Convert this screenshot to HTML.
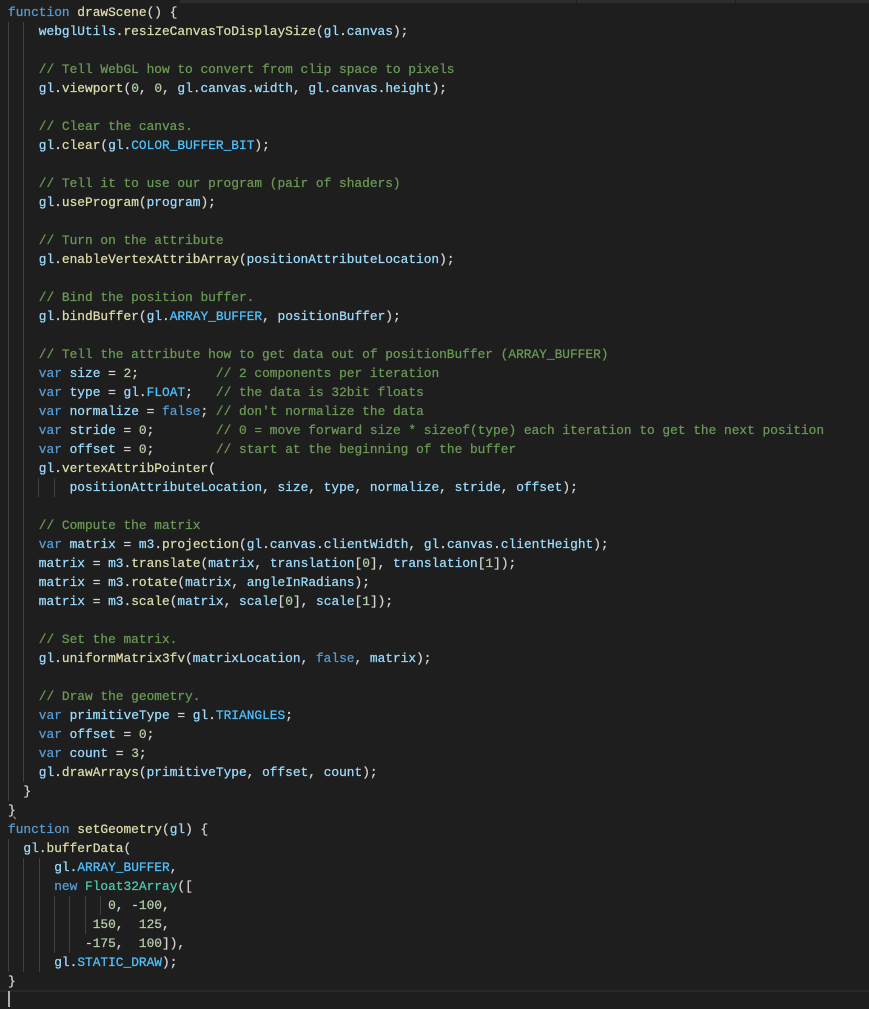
<!DOCTYPE html>
<html><head><meta charset="utf-8"><style>
html,body{margin:0;padding:0;background:#1e1e1e;width:869px;height:1007px;overflow:hidden;}
pre{position:absolute;left:8px;top:3px;margin:0;font-family:"Liberation Mono",monospace;font-size:12.84px;line-height:19px;color:#d4d4d4;white-space:pre;-webkit-text-stroke:0.25px currentColor;}
.k{color:#569cd6}.f{color:#dcdcaa}.v{color:#9cdcfe}.c{color:#6a9955}.n{color:#b5cea8}.t{color:#4ec9b0}.C{color:#4fc1ff}
.g{position:absolute;width:1px;background:#404040;}
</style></head><body>
<div style="position:absolute;left:180px;top:0;width:689px;height:3px;background:#2d2d2d;"></div>
<div style="position:absolute;left:576px;top:0;width:1px;height:3px;background:#1e1e1e;"></div>
<div style="position:absolute;left:735px;top:0;width:1px;height:3px;background:#1e1e1e;"></div>
<div class="g" style="left:8px;top:22px;height:760px"></div>
<div class="g" style="left:23px;top:22px;height:760px"></div>
<div class="g" style="left:38px;top:478px;height:19px"></div>
<div class="g" style="left:54px;top:478px;height:19px"></div>
<div class="g" style="left:8px;top:782px;height:19px"></div>
<div class="g" style="left:8px;top:839px;height:133px"></div>
<div class="g" style="left:23px;top:858px;height:114px"></div>
<div class="g" style="left:39px;top:858px;height:114px"></div>
<div class="g" style="left:54px;top:896px;height:57px"></div>
<div class="g" style="left:69px;top:896px;height:57px"></div>
<div class="g" style="left:85px;top:896px;height:38px"></div>
<div class="g" style="left:100px;top:896px;height:19px"></div>
<div style="position:absolute;left:0;top:990px;width:869px;height:17px;border-top:2px solid #282828;"></div>
<div style="position:absolute;left:8px;top:991px;width:2px;height:16px;background:#aeafad;"></div>
<pre><span class="k">function</span> <span class="f">drawScene</span>() {
    <span class="v">webglUtils</span>.<span class="f">resizeCanvasToDisplaySize</span>(<span class="v">gl</span>.<span class="v">canvas</span>);

    <span class="c">// Tell WebGL how to convert from clip space to pixels</span>
    <span class="v">gl</span>.<span class="f">viewport</span>(<span class="n">0</span>, <span class="n">0</span>, <span class="v">gl</span>.<span class="v">canvas</span>.<span class="v">width</span>, <span class="v">gl</span>.<span class="v">canvas</span>.<span class="v">height</span>);

    <span class="c">// Clear the canvas.</span>
    <span class="v">gl</span>.<span class="f">clear</span>(<span class="v">gl</span>.<span class="C">COLOR_BUFFER_BIT</span>);

    <span class="c">// Tell it to use our program (pair of shaders)</span>
    <span class="v">gl</span>.<span class="f">useProgram</span>(<span class="v">program</span>);

    <span class="c">// Turn on the attribute</span>
    <span class="v">gl</span>.<span class="f">enableVertexAttribArray</span>(<span class="v">positionAttributeLocation</span>);

    <span class="c">// Bind the position buffer.</span>
    <span class="v">gl</span>.<span class="f">bindBuffer</span>(<span class="v">gl</span>.<span class="C">ARRAY_BUFFER</span>, <span class="v">positionBuffer</span>);

    <span class="c">// Tell the attribute how to get data out of positionBuffer (ARRAY_BUFFER)</span>
    <span class="k">var</span> <span class="v">size</span> = <span class="n">2</span>;          <span class="c">// 2 components per iteration</span>
    <span class="k">var</span> <span class="v">type</span> = <span class="v">gl</span>.<span class="C">FLOAT</span>;   <span class="c">// the data is 32bit floats</span>
    <span class="k">var</span> <span class="v">normalize</span> = <span class="k">false</span>; <span class="c">// don't normalize the data</span>
    <span class="k">var</span> <span class="v">stride</span> = <span class="n">0</span>;        <span class="c">// 0 = move forward size * sizeof(type) each iteration to get the next position</span>
    <span class="k">var</span> <span class="v">offset</span> = <span class="n">0</span>;        <span class="c">// start at the beginning of the buffer</span>
    <span class="v">gl</span>.<span class="f">vertexAttribPointer</span>(
        <span class="v">positionAttributeLocation</span>, <span class="v">size</span>, <span class="v">type</span>, <span class="v">normalize</span>, <span class="v">stride</span>, <span class="v">offset</span>);

    <span class="c">// Compute the matrix</span>
    <span class="k">var</span> <span class="v">matrix</span> = <span class="v">m3</span>.<span class="f">projection</span>(<span class="v">gl</span>.<span class="v">canvas</span>.<span class="v">clientWidth</span>, <span class="v">gl</span>.<span class="v">canvas</span>.<span class="v">clientHeight</span>);
    <span class="v">matrix</span> = <span class="v">m3</span>.<span class="f">translate</span>(<span class="v">matrix</span>, <span class="v">translation</span>[<span class="n">0</span>], <span class="v">translation</span>[<span class="n">1</span>]);
    <span class="v">matrix</span> = <span class="v">m3</span>.<span class="f">rotate</span>(<span class="v">matrix</span>, <span class="v">angleInRadians</span>);
    <span class="v">matrix</span> = <span class="v">m3</span>.<span class="f">scale</span>(<span class="v">matrix</span>, <span class="v">scale</span>[<span class="n">0</span>], <span class="v">scale</span>[<span class="n">1</span>]);

    <span class="c">// Set the matrix.</span>
    <span class="v">gl</span>.<span class="f">uniformMatrix3fv</span>(<span class="v">matrixLocation</span>, <span class="k">false</span>, <span class="v">matrix</span>);

    <span class="c">// Draw the geometry.</span>
    <span class="k">var</span> <span class="v">primitiveType</span> = <span class="v">gl</span>.<span class="C">TRIANGLES</span>;
    <span class="k">var</span> <span class="v">offset</span> = <span class="n">0</span>;
    <span class="k">var</span> <span class="v">count</span> = <span class="n">3</span>;
    <span class="v">gl</span>.<span class="f">drawArrays</span>(<span class="v">primitiveType</span>, <span class="v">offset</span>, <span class="v">count</span>);
  }
<span style="text-decoration:underline wavy #d08050">}</span>
<span class="k">function</span> <span class="f">setGeometry</span>(<span class="v">gl</span>) {
  <span class="v">gl</span>.<span class="f">bufferData</span>(
      <span class="v">gl</span>.<span class="C">ARRAY_BUFFER</span>,
      <span class="k">new</span> <span class="t">Float32Array</span>([
             <span class="n">0</span>, -<span class="n">100</span>,
           <span class="n">150</span>,  <span class="n">125</span>,
          -<span class="n">175</span>,  <span class="n">100</span>]),
      <span class="v">gl</span>.<span class="C">STATIC_DRAW</span>);
}</pre>
</body></html>
